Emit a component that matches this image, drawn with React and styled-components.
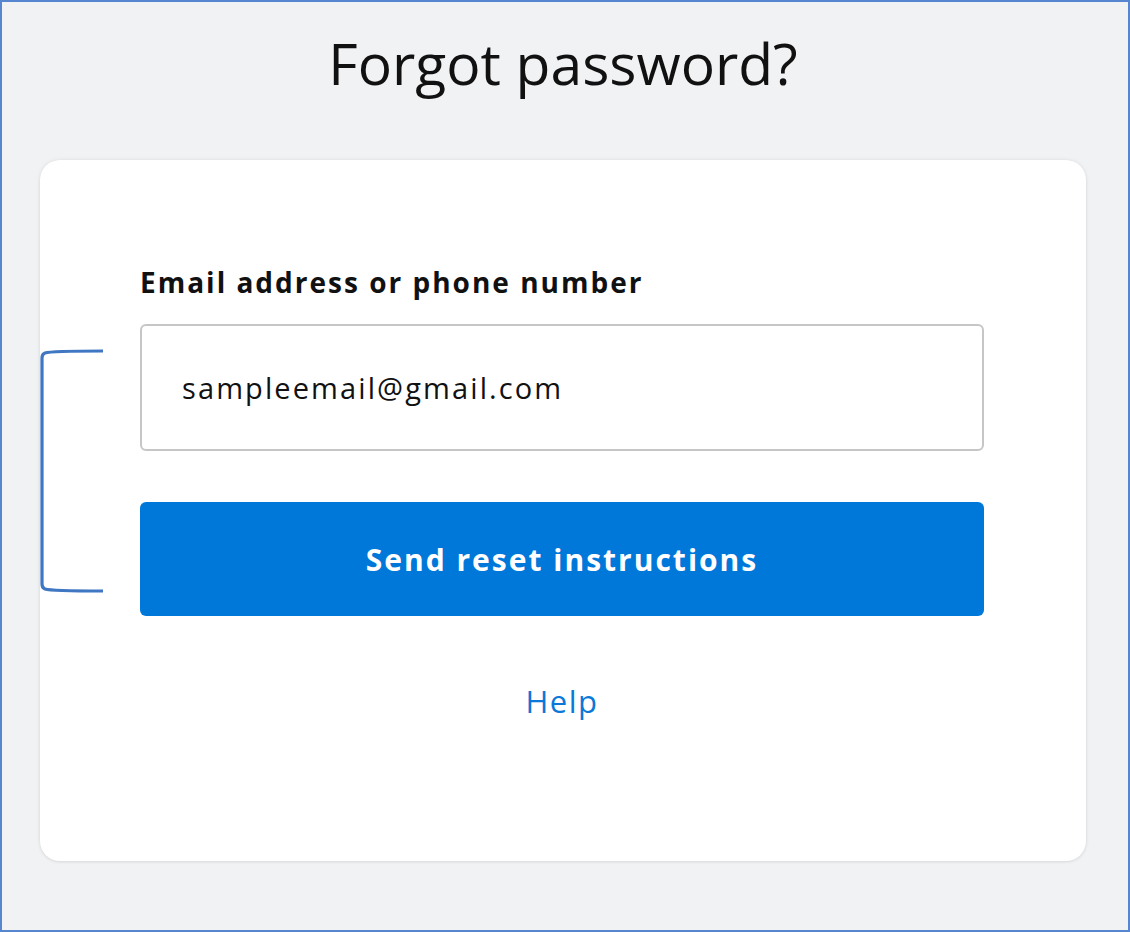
import React from "react";
import styled, { createGlobalStyle } from "styled-components";

const GlobalStyle = createGlobalStyle`
  html, body {
    margin: 0;
    padding: 0;
    background: #f1f2f4;
  }
  body {
    font-family: "Open Sans", Lato, sans-serif;
    color: #111;
  }
`;

const Frame = styled.div`
  position: relative;
  box-sizing: border-box;
  width: 1130px;
  height: 932px;
  border: 2px solid #5586cf;
  background: #f1f2f4;
  display: flex;
  flex-direction: column;
  padding: 0 42px 69px 38px;
`;

const Title = styled.h1`
  margin: 0;
  height: 158px;
  display: flex;
  align-items: center;
  justify-content: center;
  font-size: 57px;
  font-weight: 400;
  color: #111;
  padding-bottom: 36px;
  box-sizing: border-box;
`;

const Card = styled.div`
  flex: 1;
  background: #fff;
  border-radius: 20px;
  box-shadow: 0 0 4px rgba(0, 0, 0, 0.08), 0 1px 3px rgba(0, 0, 0, 0.06);
  padding: 104px 102px 0 100px;
  display: flex;
  flex-direction: column;
`;

const Label = styled.label`
  font-size: 28px;
  font-weight: 700;
  letter-spacing: 2px;
  color: #111;
  margin-bottom: 24px;
  line-height: 36px;
`;

const Input = styled.input`
  box-sizing: border-box;
  height: 127px;
  border: 2px solid #c6c6c6;
  border-radius: 6px;
  padding: 0 40px;
  font-family: inherit;
  font-size: 29px;
  letter-spacing: 2.1px;
  color: #111;
  outline: none;
`;

const Button = styled.button`
  margin-top: 51px;
  height: 114px;
  border: none;
  border-radius: 6px;
  background: #0078da;
  color: #fff;
  font-family: inherit;
  font-size: 30px;
  font-weight: 700;
  letter-spacing: 2px;
  cursor: pointer;
`;

const HelpLink = styled.a`
  margin-top: 64px;
  align-self: center;
  font-size: 31px;
  letter-spacing: 1.5px;
  color: #0a78d8;
  text-decoration: none;
`;

const Bracket = styled.svg`
  position: absolute;
  left: 37px;
  top: 346px;
`;

export default function App() {
  return (
    <>
      <GlobalStyle />
      <Frame>
        <Title>Forgot password?</Title>
        <Card>
          <Label htmlFor="email">Email address or phone number</Label>
          <Input id="email" defaultValue="sampleemail@gmail.com" />
          <Button>Send reset instructions</Button>
          <HelpLink href="#">Help</HelpLink>
        </Card>
        <Bracket width="70" height="250" viewBox="0 0 70 250">
          <path
            d="M64 3 C 40 3, 12 3, 6 5 Q 3 6, 3 10 L 3 236 Q 3 240, 6 241 C 12 243, 40 243, 64 243"
            fill="none"
            stroke="#3f77c2"
            strokeWidth="3.2"
          />
        </Bracket>
      </Frame>
    </>
  );
}
